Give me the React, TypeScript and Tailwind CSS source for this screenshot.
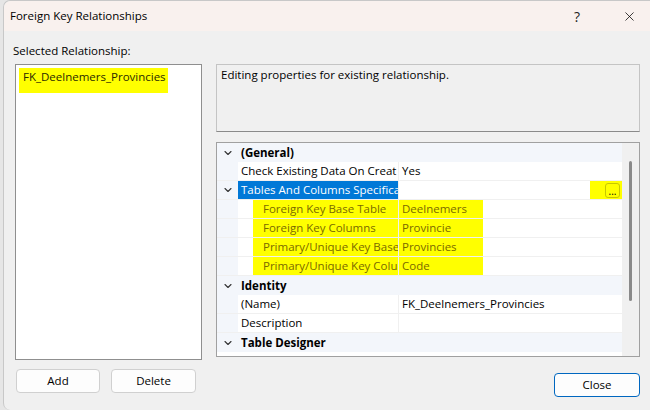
import { ChevronDown, X } from "lucide-react";

const font = { fontFamily: '"Segoe UI", "Open Sans", "Noto Sans", sans-serif' };

type Row =
  | { kind: "cat"; label: string }
  | { kind: "prop"; name: string; value: string; sel?: boolean; child?: boolean; hasChevron?: boolean; button?: boolean };

const rows: Row[] = [
  { kind: "cat", label: "(General)" },
  { kind: "prop", name: "Check Existing Data On Creat", value: "Yes" },
  { kind: "prop", name: "Tables And Columns Specifica", value: "", sel: true, hasChevron: true, button: true },
  { kind: "prop", name: "Foreign Key Base Table", value: "Deelnemers", child: true },
  { kind: "prop", name: "Foreign Key Columns", value: "Provincie", child: true },
  { kind: "prop", name: "Primary/Unique Key Base", value: "Provincies", child: true },
  { kind: "prop", name: "Primary/Unique Key Colu", value: "Code", child: true },
  { kind: "cat", label: "Identity" },
  { kind: "prop", name: "(Name)", value: "FK_Deelnemers_Provincies" },
  { kind: "prop", name: "Description", value: "" },
  { kind: "cat", label: "Table Designer" },
];

function GridRow({ row }: { row: Row }) {
  if (row.kind === "cat") {
    return (
      <div className="flex h-[19px] shrink-0 bg-[#f3f6fb] items-center">
        <div className="w-[21px] flex justify-center">
          <ChevronDown size={12} strokeWidth={2.2} className="text-[#333]" />
        </div>
        <span className="pl-[3px] font-bold text-black">{row.label}</span>
      </div>
    );
  }
  return (
    <div className="flex h-[19px] shrink-0 border-b border-[#f0f0f0] bg-white">
      <div className="w-[21px] bg-[#f3f6fb] flex justify-center items-center">
        {row.hasChevron && <ChevronDown size={12} strokeWidth={2.2} className="text-[#333]" />}
      </div>
      {row.child ? (
        <div className="w-[160px] flex">
          <div className="w-[15px]" />
          <div className="flex-1 bg-[#ffff00] pl-[10px] text-[#7a6a00] whitespace-nowrap overflow-hidden leading-[18px]">{row.name}</div>
        </div>
      ) : (
        <div
          className={
            "w-[160px] pl-[3px] whitespace-nowrap overflow-hidden leading-[18px] " +
            (row.sel ? "bg-[#0078d7] text-white" : "text-black")
          }
        >
          {row.name}
        </div>
      )}
      <div className="flex-1 border-l border-[#f0f0f0] flex">
        {row.child ? (
          <div className="w-[84px] bg-[#ffff00] pl-[3px] text-[#7a6a00] leading-[18px]">{row.value}</div>
        ) : (
          <div className="flex-1 pl-[3px] text-black leading-[18px]">{row.value}</div>
        )}
        {row.button && (
          <div className="ml-auto w-[32px] bg-[#ffff00] flex items-center justify-end pr-[2px]">
            <div className="w-[15px] h-[15px] rounded-[3px] border border-[#c8c800] flex items-end justify-center text-[10px] leading-[12px] text-black">...</div>
          </div>
        )}
      </div>
    </div>
  );
}

export default function App() {
  return (
    <div className="w-[650px] h-[410px] bg-[#e6e6e6] pl-[3px] overflow-hidden text-[11.5px]" style={font}>
      <div className="h-full bg-[#f0f0f0] border-l border-t border-[#c8c8c8] rounded-tl-[7px] rounded-bl-[7px] flex flex-col">
        {/* TITLE BAR */}
        <div className="h-[30px] bg-[#f9f1ee] flex items-center pl-[6px] rounded-tl-[7px]">
          <span className="text-black">Foreign Key Relationships</span>
          <span className="ml-auto mr-[42px] text-[14px] text-[#222]">?</span>
          <X size={15} strokeWidth={1.2} className="mr-[13px] text-black" />
        </div>

        <div className="flex-1 flex flex-col pl-[11px]">
          <div className="mt-[12px] ml-[-2px] text-black leading-[16px]">Selected Relationship:</div>

          <div className="flex gap-[14px] mt-[5px]">
            {/* LEFT */}
            <div className="w-[187px] flex flex-col">
              <div className="h-[296px] border border-[#8f8f8f] bg-white p-[3px]">
                <div className="w-[149px] h-[25px] bg-[#ffff00] pl-[4px] text-[#2a2a00] leading-[18px]">FK_Deelnemers_Provincies</div>
              </div>
              <div className="flex gap-[11px] mt-[9px] pl-[1px]">
                <button className="w-[84px] h-[24px] bg-[#fdfdfd] border border-[#d0d0d0] rounded-[4px] text-black">Add</button>
                <button className="w-[85px] h-[24px] bg-[#fdfdfd] border border-[#d0d0d0] rounded-[4px] text-black">Delete</button>
              </div>
            </div>

            {/* RIGHT */}
            <div className="w-[424px] flex flex-col">
              <div className="h-[68px] border border-[#c4c4c4] border-b-[#8a8a8a] bg-[#f0f0f0] px-[4px] pt-[1px] text-black">
                Editing properties for existing relationship.
              </div>
              <div className="mt-[10px] h-[215px] border border-[#a0a0a0] flex bg-white">
                <div className="flex-1 flex flex-col overflow-hidden">
                  {rows.map((r, i) => (
                    <GridRow key={i} row={r} />
                  ))}
                </div>
                <div className="w-[17px] bg-[#f0f0f0] flex justify-center pt-[18px]">
                  <div className="w-[3px] h-[140px] bg-[#8a8a8a] rounded-full" />
                </div>
              </div>
              <div className="flex justify-end mt-[16px]">
                <button className="w-[86px] h-[24px] bg-[#fdfdfd] border border-[#0067c0] rounded-[4px] text-black">Close</button>
              </div>
            </div>
          </div>
        </div>
      </div>
    </div>
  );
}
